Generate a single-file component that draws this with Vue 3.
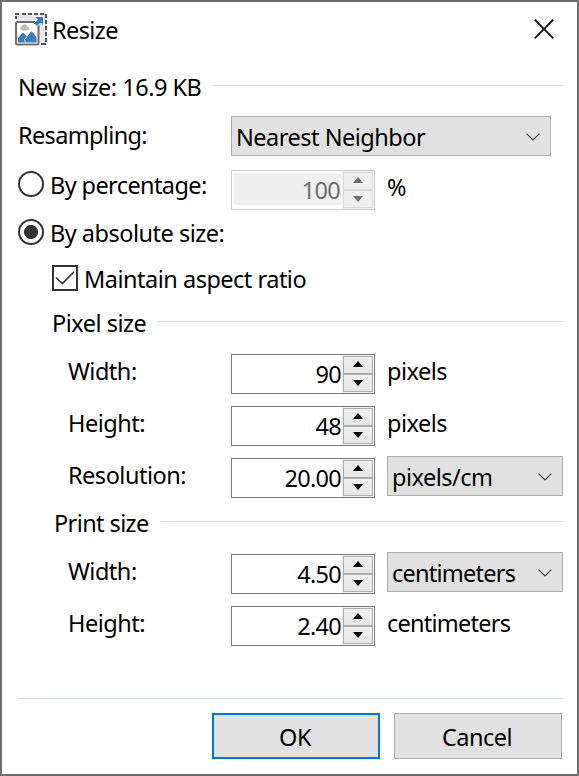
<script setup>
import { ref } from 'vue'

const mode = ref('absolute')
const keepRatio = ref(true)

const pixelRows = [
  { label: 'Width:', value: '90', unit: 'pixels' },
  { label: 'Height:', value: '48', unit: 'pixels' },
  { label: 'Resolution:', value: '20.00', unit: 'pixels/cm', select: true },
]
const printRows = [
  { label: 'Width:', value: '4.50', unit: 'centimeters', select: true },
  { label: 'Height:', value: '2.40', unit: 'centimeters' },
]
const sections = [
  { title: 'Pixel size', kind: 'pixel', rows: pixelRows },
  { title: 'Print size', kind: 'print', rows: printRows },
]
</script>

<template>
  <main class="dialog">
    <header class="titlebar">
      <svg class="app-icon" width="32" height="33" viewBox="0 0 32 33">
        <path d="M1 1H31V31H1Z" fill="#e6e8ed" />
        <path d="M1 6V3M0 1H4M7 1H11M13 1H17M19 1H23M25 1H29M31 1V5M31 7V11M31 13V17M31 19V23M31 25V29M26 31H31" fill="none" stroke="#555" stroke-width="2" />
        <rect x="1" y="9" width="22.5" height="22.5" rx="1.5" fill="#fff" stroke="#6e6e6e" stroke-width="2" />
        <path d="M6.8 17.5a2.3 2.3 0 0 1-.3-4.2 3.2 3.2 0 0 1 6 .1 2.1 2.1 0 0 1 0 4.1Z" fill="#bcbcbc" />
        <path d="M3 29.5V25L8 19.5L12 23.5L16.5 18L21.5 24V29.5Z" fill="#3d7ab8" />
        <path d="M10.5 29.5L9.5 26.5L12 23.5" fill="none" stroke="#fff" stroke-width=".8" />
        <path d="M19 3.5H28.5V13L25.5 10L22 13.5L18.5 10.5L22.3 6.8Z" fill="#3d7ab8" stroke="#fff" stroke-width="1" />
      </svg>
      <h1 class="caption">Resize</h1>
      <button class="close" aria-label="Close">
        <svg width="20" height="20" viewBox="0 0 20 20"><path d="M.7 .7L19.3 19.3M19.3 .7L.7 19.3" stroke="#111" stroke-width="1.9" /></svg>
      </button>
    </header>

    <div class="group new-size"><span>New size: 16.9 KB</span><i class="rule"></i></div>

    <div class="row resampling">
      <span class="label">Resampling:</span>
      <button class="select wide">
        <span>Nearest Neighbor</span>
        <svg width="14" height="8" viewBox="0 0 14 8"><path d="M.5 .6L7 7L13.5 .6" fill="none" stroke="#444" stroke-width="1.2" /></svg>
      </button>
    </div>

    <div class="row percent">
      <button class="option" role="radio" @click="mode = 'percent'">
        <i class="radio" :class="{ on: mode === 'percent' }"></i><span>By percentage:</span>
      </button>
      <div class="spin disabled">
        <span class="value">100</span>
        <span class="steps">
          <i class="step"><svg width="10" height="6" viewBox="0 0 10 6"><path d="M0 6L5 0L10 6Z" /></svg></i>
          <i class="step"><svg width="10" height="6" viewBox="0 0 10 6"><path d="M0 0L5 6L10 0Z" /></svg></i>
        </span>
      </div>
      <span class="unit">%</span>
    </div>

    <button class="option absolute-size" role="radio" @click="mode = 'absolute'">
      <i class="radio" :class="{ on: mode === 'absolute' }"></i><span>By absolute size:</span>
    </button>

    <button class="option ratio" role="checkbox" @click="keepRatio = !keepRatio">
      <i class="check">
        <svg v-if="keepRatio" width="20" height="14" viewBox="0 0 20 14"><path d="M1 6.5L7.3 12.6L19 .8" fill="none" stroke="#333" stroke-width="1.6" /></svg>
      </i>
      <span>Maintain aspect ratio</span>
    </button>

    <section v-for="s in sections" :key="s.kind" class="section" :class="s.kind">
      <div class="group"><span>{{ s.title }}</span><i class="rule"></i></div>
      <div v-for="r in s.rows" :key="r.label" class="row field">
        <span class="label">{{ r.label }}</span>
        <div class="spin">
          <span class="value">{{ r.value }}</span>
          <span class="steps">
            <i class="step"><svg width="10" height="6" viewBox="0 0 10 6"><path d="M0 6L5 0L10 6Z" /></svg></i>
            <i class="step"><svg width="10" height="6" viewBox="0 0 10 6"><path d="M0 0L5 6L10 0Z" /></svg></i>
          </span>
        </div>
        <button v-if="r.select" class="select" :class="r.unit === 'centimeters' && 'tight'">
          <span>{{ r.unit }}</span>
          <svg width="14" height="8" viewBox="0 0 14 8"><path d="M.5 .6L7 7L13.5 .6" fill="none" stroke="#444" stroke-width="1.2" /></svg>
        </button>
        <span v-else class="unit" :class="r.unit === 'centimeters' && 'tight'">{{ r.unit }}</span>
      </div>
    </section>

    <footer class="footer">
      <button class="action primary">OK</button>
      <button class="action">Cancel</button>
    </footer>
  </main>
</template>

<style>
body { margin: 0; background: #fff; }
</style>

<style scoped>
.dialog {
  box-sizing: border-box;
  width: 579px;
  height: 776px;
  border: 2px solid #6e6e6e;
  padding: 0 14px 0 16px;
  background: #fff;
  color: #000;
  font: 23.5px/34px "Noto Sans", "Open Sans", sans-serif;
  letter-spacing: -0.5px;
  white-space: nowrap;
  overflow: hidden;
}
button {
  box-sizing: border-box;
  margin: 0;
  padding: 0;
  border: 0;
  border-radius: 0;
  background: none;
  color: inherit;
  font: inherit;
  letter-spacing: inherit;
  text-align: left;
}
svg { display: block; }
.titlebar { display: flex; height: 68px; margin-left: -3px; }
.app-icon { margin-top: 11px; }
.caption { margin: 11px 0 0 5px; font: inherit; letter-spacing: -0.6px; }
.close { margin: 17px 9px 0 auto; height: 20px; }
.group { display: flex; height: 34px; }
.rule { flex: 1; height: 1px; margin: 15px 0 0 12px; background: #d5dfe5; }
.row { display: flex; height: 40px; }
.label { width: 163px; }
.resampling { margin-top: 12px; }
.resampling .label { width: 213px; margin-top: 2px; letter-spacing: -0.65px; }
.percent { margin-top: 14px; }
.percent .option { width: 213px; margin-top: -2px; letter-spacing: -0.6px; }
.option { display: flex; height: 34px; }
.option span { margin-left: 6px; }
.radio {
  box-sizing: border-box;
  width: 26px;
  height: 26px;
  margin-top: 3px;
  border: 2px solid #333;
  border-radius: 50%;
}
.radio.on { background: radial-gradient(circle, #333 6.6px, #fff 7.4px); }
.absolute-size { margin-top: 6px; }
.ratio { margin: 12px 0 0 34px; }
.check {
  box-sizing: border-box;
  display: flex;
  align-items: center;
  justify-content: center;
  width: 26px;
  height: 26px;
  margin-top: 3px;
  border: 2px solid #333;
}
.section { padding-left: 34px; }
.pixel { margin-top: 10px; }
.print { margin-top: 8px; }
.print .group { padding-left: 2px; letter-spacing: -0.6px; }
.field { margin: 12px 0 0 16px; }
.group + .field { margin-top: 14px; }
.spin {
  box-sizing: border-box;
  display: flex;
  width: 144px;
  height: 40px;
  border: 1px solid #7a7a7a;
}
.value { width: 109px; margin-top: 2px; padding-right: 1px; text-align: right; letter-spacing: -0.7px; }
.steps { display: grid; grid-template-rows: 18px 18px; width: 30px; padding: 1px 0 1px 1px; background: #f0f0f0; }
.step {
  display: flex;
  align-items: center;
  justify-content: center;
  border: 1px solid #adadad;
  background: linear-gradient(#f0f0f0, #e6e6e6);
}
.step:first-child svg { margin-bottom: 2px; }
.disabled { border-color: #ccc; color: #6d6d6d; fill: #6d6d6d; }
.disabled .value { width: 106px; height: 32px; margin: 2px 1px 0 2px; background: #f0f0f0; }
.disabled .step { border-color: #d9d9d9; background: #f0f0f0; }
.unit { margin-left: 12px; }
.select {
  display: flex;
  align-items: center;
  justify-content: space-between;
  width: 176px;
  height: 40px;
  margin: -2px 0 0 12px;
  padding: 2px 10px 0 4px;
  border: 1px solid #adadad;
  background: #e1e1e1;
}
.select svg { margin-bottom: 1px; }
.tight { letter-spacing: -0.75px; }
.wide { width: 320px; margin: 0; }
.footer {
  display: flex;
  justify-content: flex-end;
  gap: 14px;
  margin-top: 52px;
  padding: 14px 1px 0 0;
  border-top: 1px solid #d5dfe5;
}
.action {
  width: 168px;
  height: 46px;
  border: 1px solid #adadad;
  background: #e1e1e1;
  text-align: center;
  padding: 2px 2px 0 0;
}
.primary { border: 2px solid #0078d7; }
</style>
